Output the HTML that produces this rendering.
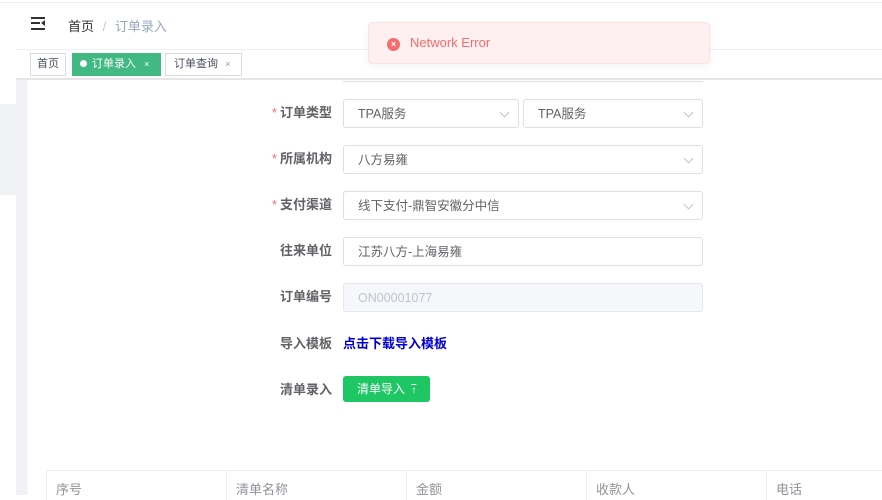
<!DOCTYPE html>
<html><head><meta charset="utf-8"><style>
*{box-sizing:border-box;margin:0;padding:0}
body{width:882px;height:495px;overflow:hidden;background:#fff;font-family:"Liberation Sans","Noto Sans CJK SC",sans-serif;position:relative;color:#606266}
.abs{position:absolute}
.lbl{position:absolute;right:550px;font-size:13px;font-weight:bold;color:#606266;text-align:right;white-space:nowrap}
.lbl b{color:#f56c6c;font-weight:normal;margin-right:3px}
.inp{position:absolute;height:29px;border:1px solid #dcdfe6;border-radius:3px;font-size:12.5px;color:#606266;padding-left:14px;line-height:28px;background:#fff}
.arr{position:absolute;right:10px;top:9px;width:7px;height:7px;border-right:1px solid #c0c4cc;border-bottom:1px solid #c0c4cc;transform:rotate(45deg)}
.th{position:absolute;top:470px;height:30px;border-left:1px solid #ebeef5;font-size:13px;color:#909399;padding:9px 0 0 9px}
</style></head><body>
<div class="abs" style="left:0;top:2px;width:882px;height:1px;background:#eceef2"></div>
<div class="abs" style="left:31px;top:17px;width:14px;height:2px;background:#303133"></div>
<div class="abs" style="left:31px;top:22px;width:9px;height:2px;background:#303133"></div>
<div class="abs" style="left:31px;top:28px;width:14px;height:2px;background:#303133"></div>
<div class="abs" style="left:41px;top:20px;width:0;height:0;border-top:3px solid transparent;border-bottom:3px solid transparent;border-right:4px solid #303133"></div>
<div class="abs" style="left:68px;top:16px;font-size:13px;color:#303133">首页 <span style="color:#c0c4cc;margin:0 5px">/</span> <span style="color:#97a8be">订单录入</span></div>
<div class="abs" style="left:16px;top:49px;width:866px;height:1px;background:#eef0f3"></div>
<div class="abs" style="left:16px;top:78px;width:866px;height:2px;background:#e4e6ea"></div>
<div class="abs" style="left:30px;top:53px;width:36px;height:23px;border:1px solid #d8dce5;font-size:11px;color:#495060;line-height:21px;text-align:center">首页</div>
<div class="abs" style="left:72px;top:53px;width:89px;height:23px;background:#42b983;font-size:11px;color:#fff;line-height:23px;padding-left:8px"><span style="display:inline-block;width:7px;height:7px;border-radius:50%;background:#fff;margin-right:5px"></span>订单录入 <span style="font-size:9px;margin-left:5px">×</span></div>
<div class="abs" style="left:165px;top:53px;width:77px;height:23px;border:1px solid #d8dce5;font-size:11px;color:#495060;line-height:21px;padding-left:8px">订单查询 <span style="font-size:9px;color:#999;margin-left:4px">×</span></div>
<div class="abs" style="left:0;top:104px;width:16px;height:91px;background:#f0f2f5"></div>
<div class="abs" style="left:16px;top:80px;width:11px;height:415px;background:#f0f2f5"></div>
<div class="abs" style="left:27px;top:80px;width:1px;height:415px;background:#f5f6f8"></div>
<div class="abs" style="left:343px;top:80px;width:360px;height:2px;border-bottom:1px solid #dcdfe6"></div>
<div class="lbl" style="top:102px"><b>*</b>订单类型</div>
<div class="inp" style="left:343px;top:99px;width:176px">TPA服务<i class="arr"></i></div>
<div class="inp" style="left:523px;top:99px;width:180px">TPA服务<i class="arr"></i></div>
<div class="lbl" style="top:148px"><b>*</b>所属机构</div>
<div class="inp" style="left:343px;top:145px;width:360px">八方易雍<i class="arr"></i></div>
<div class="lbl" style="top:194px"><b>*</b>支付渠道</div>
<div class="inp" style="left:343px;top:191px;width:360px">线下支付-鼎智安徽分中信<i class="arr"></i></div>
<div class="lbl" style="top:240px">往来单位</div>
<div class="inp" style="left:343px;top:237px;width:360px">江苏八方-上海易雍</div>
<div class="lbl" style="top:286px">订单编号</div>
<div class="inp" style="left:343px;top:283px;width:360px;background:#f5f7fa;border-color:#e4e7ed;color:#c0c4cc">ON00001077</div>
<div class="lbl" style="top:333px">导入模板</div>
<div class="abs" style="left:343px;top:333px;font-size:13px;font-weight:bold;color:#0000cc">点击下载导入模板</div>
<div class="lbl" style="top:379px">清单录入</div>
<div class="abs" style="left:343px;top:376px;width:87px;height:26px;background:#1ec763;border-radius:3px;color:#fff;font-size:12px;line-height:26px;padding-left:14px">清单导入 <span style="font-size:10px;margin-left:3px;text-decoration:overline">↑</span></div>
<div class="abs" style="left:46px;top:470px;width:836px;height:1px;background:#ebeef5"></div>
<div class="th" style="left:46px">序号</div>
<div class="th" style="left:226px">清单名称</div>
<div class="th" style="left:406px">金额</div>
<div class="th" style="left:586px">收款人</div>
<div class="th" style="left:766px">电话</div>
<div class="abs" style="left:368px;top:22px;width:342px;height:42px;background:#fef0f0;border:1px solid #fde2e2;border-radius:4px;box-shadow:0 2px 8px rgba(0,0,0,.05)"></div>
<div class="abs" style="left:387px;top:38px;width:13px;height:13px;border-radius:50%;background:#f56c6c;color:#fff;font-size:9px;line-height:13px;text-align:center;font-weight:bold">×</div>
<div class="abs" style="left:410px;top:35px;font-size:13px;color:#f56c6c">Network Error</div>
</body></html>
